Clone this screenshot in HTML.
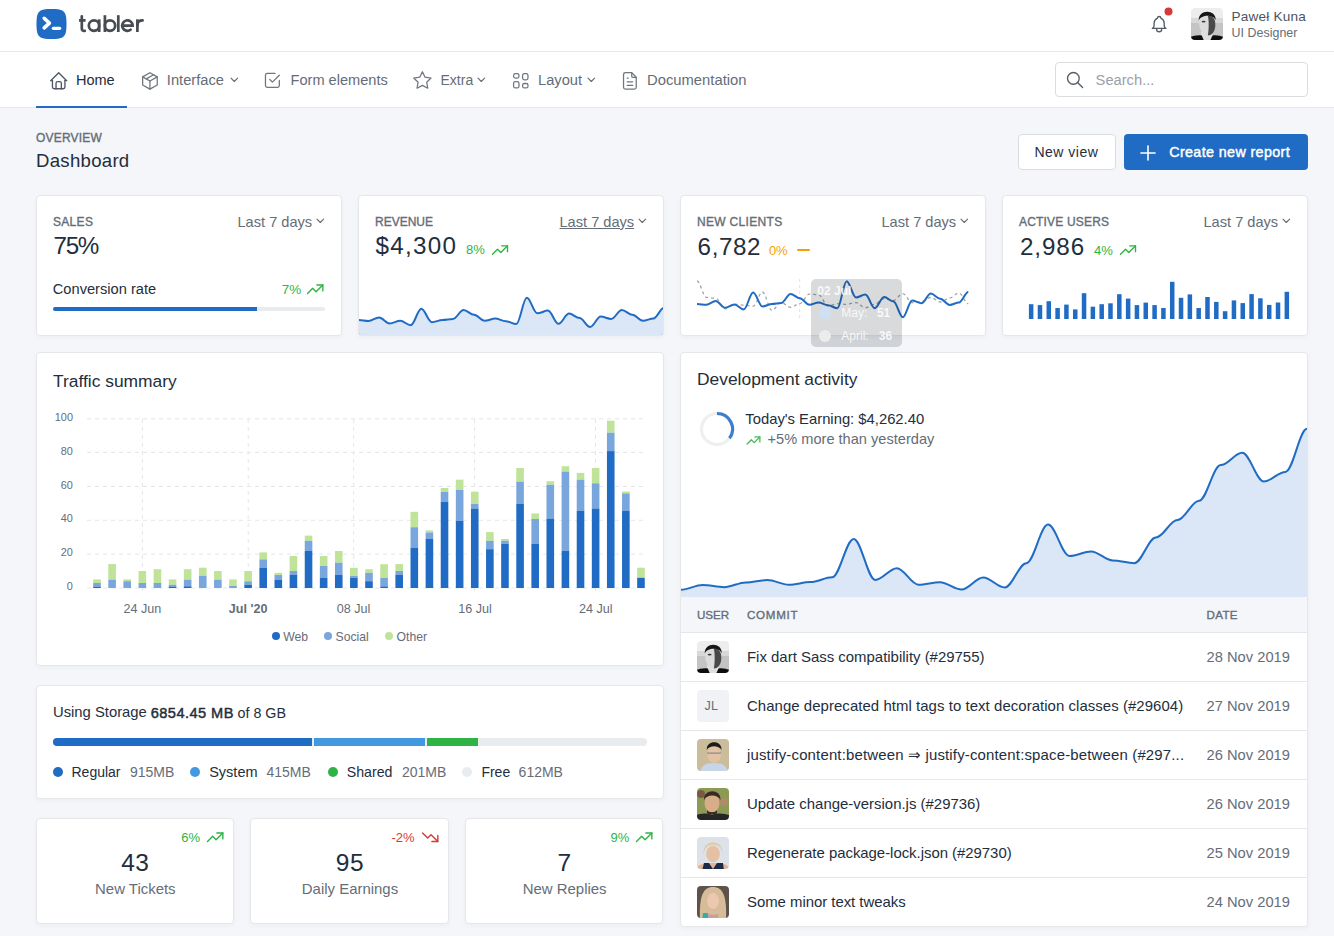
<!DOCTYPE html>
<html><head><meta charset="utf-8"><title>Dashboard - Tabler</title>
<style>
html,body{margin:0;padding:0;}
body{width:1334px;height:936px;overflow:hidden;position:relative;background:#f4f6fa;font-family:"Liberation Sans",sans-serif;}
.t{position:absolute;line-height:1;white-space:nowrap;}
.r{position:absolute;}
svg.r{overflow:visible;}
</style></head><body>
<div class="r" style="left:0px;top:0px;width:1334px;height:51px;background:#fff;"></div>
<div class="r" style="left:0px;top:51px;width:1334px;height:1px;background:#e6e7e9;"></div>
<svg class="r" style="left:36px;top:9px;" width="31" height="30" viewBox="0 0 31 30"><path d="M15.5 0C28.3 0 30.5 2.2 30.5 15S28.3 30 15.5 30S0.5 27.8 0.5 15S2.7 0 15.5 0z" fill="#206bc4"/><path d="M8.2 9.3l5.2 4.8l-5.2 4.8" fill="none" stroke="#fff" stroke-width="3.6" stroke-linecap="round" stroke-linejoin="round"/><line x1="17.3" y1="19.3" x2="23.7" y2="19.3" stroke="#fff" stroke-width="3.2" stroke-linecap="round"/></svg>
<svg class="r" style="left:70px;top:10px;" width="80" height="30" viewBox="0 0 80 30"><g transform="translate(-70,-10)" fill="none" stroke="#474b52" stroke-width="2.7" stroke-linecap="butt"><path d="M81.8 16.3 V28.6 Q81.8 31.2 84.8 30.9" stroke-linecap="round"/><path d="M79 20.4 H85.6"/><circle cx="94" cy="25.6" r="5.2"/><path d="M99.2 19.3 V32"/><path d="M104.9 15.2 V32"/><circle cx="110" cy="25.6" r="5.2"/><path d="M118.3 15.2 V32"/><path d="M122.3 25.6 H132.6 A5.2 5.2 0 1 0 130.6 29.7" stroke-linecap="round"/><path d="M137.4 19.3 V32"/><path d="M137.4 25 Q137.6 20.4 142.6 20.4" stroke-linecap="round"/></g></svg>
<svg class="r" style="left:1148.8px;top:14.0px" width="20.3" height="20.3" viewBox="0 0 24 24" fill="none" stroke="#565d67" stroke-width="1.6" stroke-linecap="round" stroke-linejoin="round"><path d="M10 5a2 2 0 0 1 4 0a7 7 0 0 1 4 6v3a4 4 0 0 0 2 3h-16a4 4 0 0 0 2 -3v-3a7 7 0 0 1 4 -6"/><path d="M9 17v1a3 3 0 0 0 6 0v-1"/></svg>
<svg class="r" style="left:1164px;top:7px;" width="9" height="9" viewBox="0 0 9 9"><circle cx="4.5" cy="4.5" r="4" fill="#d63939"/></svg>
<svg class="r" style="left:1191px;top:8px;" width="32" height="32" viewBox="0 0 32 32"><defs><clipPath id="ch"><rect width="32" height="32" rx="4"/></clipPath><filter id="fh" x="-20%" y="-20%" width="140%" height="140%"><feGaussianBlur stdDeviation="0.7"/></filter></defs><g clip-path="url(#ch)"><g filter="url(#fh)"><rect x="-2" y="-2" width="36" height="36" fill="#ededed"/><rect x="-2" y="13" width="36" height="21" fill="#c4c4c4"/><rect x="-2" y="10" width="36" height="5" fill="#d8d8d8"/><path d="M10 34 L10 24 L22 24 L22 34z" fill="#dedede"/><ellipse cx="16.2" cy="16" rx="8" ry="10.8" fill="#dcdcdc"/><path d="M16.8 7.5 C22.5 7.5 24.8 12 24.3 18 C23.8 24.5 20.5 27.5 16.8 27.5 C18 22 18 12 16.8 7.5z" fill="#4a4a4a"/><ellipse cx="12.6" cy="13.6" rx="2" ry="0.9" fill="#3a3a3a"/><path d="M7.8 12.5 C6.8 1.5 25 0.5 24.8 12.5 C23 6.5 10.5 6 7.8 12.5z" fill="#161616"/><path d="M-2 34 L-2 29.5 C3 27.5 7 27 10.8 27.5 L13.5 34z" fill="#101010"/><path d="M34 34 L34 29.5 C29 27.5 25 27 21.5 27.5 L18.5 34z" fill="#101010"/></g></g></svg>
<div class="t" style="left:1231.50px;top:10.08px;font-size:13.6px;color:#4d5562;letter-spacing:0.2px;">Paweł Kuna</div>
<div class="t" style="left:1231.50px;top:26.70px;font-size:12.4px;color:#656d77;letter-spacing:0.05px;">UI Designer</div>
<div class="r" style="left:0px;top:52px;width:1334px;height:55px;background:#fff;"></div>
<div class="r" style="left:0px;top:107px;width:1334px;height:1px;background:#e6e7e9;"></div>
<div class="r" style="left:36px;top:106px;width:91px;height:2px;background:#206bc4;"></div>
<svg class="r" style="left:48px;top:69.8px" width="21.4" height="21.4" viewBox="0 0 24 24" fill="none" stroke="#4f5763" stroke-width="1.5" stroke-linecap="round" stroke-linejoin="round"><path d="M5 12l-2 0l9 -9l9 9l-2 0"/><path d="M5 12v7a2 2 0 0 0 2 2h10a2 2 0 0 0 2 -2v-7"/><path d="M9 21v-6a2 2 0 0 1 2 -2h2a2 2 0 0 1 2 2v6"/></svg>
<div class="t" style="left:76.00px;top:72.82px;font-size:14.5px;color:#232e3c;">Home</div>
<svg class="r" style="left:138.5px;top:70px" width="21.9" height="21.9" viewBox="0 0 24 24" fill="none" stroke="#6f7681" stroke-width="1.4" stroke-linecap="round" stroke-linejoin="round"><polyline points="12 3 20 7.5 20 16.5 12 21 4 16.5 4 7.5 12 3"/><line x1="12" y1="12" x2="20" y2="7.5"/><line x1="12" y1="12" x2="12" y2="21"/><line x1="12" y1="12" x2="4" y2="7.5"/><line x1="16" y1="5.25" x2="8" y2="9.75"/></svg>
<div class="t" style="left:166.80px;top:72.65px;font-size:14.7px;color:#656d77;">Interface</div>
<svg class="r" style="left:229.6px;top:77.2px;" width="10" height="7" viewBox="0 0 10 7"><polyline points="1,1.2 4.3,4.5 7.6,1.2" fill="none" stroke="#656d77" stroke-width="1.15" stroke-linecap="round" stroke-linejoin="round"/></svg>
<svg class="r" style="left:262.1px;top:70px" width="20.8" height="20.8" viewBox="0 0 24 24" fill="none" stroke="#6f7681" stroke-width="1.45" stroke-linecap="round" stroke-linejoin="round"><polyline points="9 11 12 14 20 6"/><path d="M20 12v6a2 2 0 0 1 -2 2h-12a2 2 0 0 1 -2 -2v-12a2 2 0 0 1 2 -2h9"/></svg>
<div class="t" style="left:290.50px;top:72.74px;font-size:14.6px;color:#656d77;">Form elements</div>
<svg class="r" style="left:412.1px;top:69.5px" width="20.8" height="20.8" viewBox="0 0 24 24" fill="none" stroke="#6f7681" stroke-width="1.45" stroke-linecap="round" stroke-linejoin="round"><path d="M12 17.75l-6.172 3.245l1.179 -6.873l-5 -4.867l6.9 -1l3.086 -6.253l3.086 6.253l6.9 1l-5 4.867l1.179 6.873z"/></svg>
<div class="t" style="left:440.50px;top:73.25px;font-size:14.0px;color:#656d77;">Extra</div>
<svg class="r" style="left:477px;top:77.2px;" width="10" height="7" viewBox="0 0 10 7"><polyline points="1,1.2 4.3,4.5 7.6,1.2" fill="none" stroke="#656d77" stroke-width="1.15" stroke-linecap="round" stroke-linejoin="round"/></svg>
<svg class="r" style="left:509.7px;top:69.7px" width="21.6" height="21.6" viewBox="0 0 24 24" fill="none" stroke="#6f7681" stroke-width="1.4" stroke-linecap="round" stroke-linejoin="round"><rect x="4" y="4" width="6" height="5" rx="2"/><rect x="4" y="13" width="6" height="7" rx="2"/><rect x="14" y="4" width="6" height="7" rx="2"/><rect x="14" y="15" width="6" height="5" rx="2"/></svg>
<div class="t" style="left:538.00px;top:72.65px;font-size:14.7px;color:#656d77;">Layout</div>
<svg class="r" style="left:586.6px;top:77.2px;" width="10" height="7" viewBox="0 0 10 7"><polyline points="1,1.2 4.3,4.5 7.6,1.2" fill="none" stroke="#656d77" stroke-width="1.15" stroke-linecap="round" stroke-linejoin="round"/></svg>
<svg class="r" style="left:618.5px;top:69.8px" width="21.8" height="21.8" viewBox="0 0 24 24" fill="none" stroke="#6f7681" stroke-width="1.4" stroke-linecap="round" stroke-linejoin="round"><path d="M14 3v4a1 1 0 0 0 1 1h4"/><path d="M17 21h-10a2 2 0 0 1 -2 -2v-14a2 2 0 0 1 2 -2h7l5 5v11a2 2 0 0 1 -2 2z"/><line x1="9" y1="9" x2="10" y2="9"/><line x1="9" y1="13" x2="15" y2="13"/><line x1="9" y1="17" x2="15" y2="17"/></svg>
<div class="t" style="left:647.00px;top:72.57px;font-size:14.8px;color:#656d77;">Documentation</div>
<div class="r" style="left:1055px;top:62px;width:253px;height:35px;background:#fff;border:1px solid #dadcde;border-radius:4px;box-sizing:border-box;"></div>
<svg class="r" style="left:1065px;top:69.9px" width="20.1" height="20.1" viewBox="0 0 24 24" fill="none" stroke="#565d67" stroke-width="1.6" stroke-linecap="round" stroke-linejoin="round"><circle cx="10" cy="10" r="7"/><line x1="21" y1="21" x2="15" y2="15"/></svg>
<div class="t" style="left:1095.60px;top:72.55px;font-size:14.7px;color:#9aa0ac;">Search...</div>
<div class="t" style="left:36.00px;top:131.84px;font-size:12px;color:#656d77;letter-spacing:0.2px;-webkit-text-stroke:0.35px #656d77;">OVERVIEW</div>
<div class="t" style="left:36.00px;top:152.25px;font-size:18.6px;color:#232e3c;letter-spacing:0.28px;">Dashboard</div>
<div class="r" style="left:1018px;top:134px;width:98px;height:36px;background:#fff;border:1px solid #dadcde;border-radius:4px;box-sizing:border-box;"></div>
<div class="t" style="left:1034.40px;top:145.15px;font-size:14px;color:#232e3c;letter-spacing:0.5px;">New view</div>
<div class="r" style="left:1124px;top:134px;width:184px;height:36px;background:#206bc4;border-radius:4px;"></div>
<svg class="r" style="left:1135.75px;top:141.25px" width="24" height="24" viewBox="0 0 24 24" fill="none" stroke="#fff" stroke-width="1.6" stroke-linecap="round" stroke-linejoin="round"><line x1="12" y1="5" x2="12" y2="19"/><line x1="5" y1="12" x2="19" y2="12"/></svg>
<div class="t" style="left:1169.20px;top:144.69px;font-size:14.3px;color:#fff;letter-spacing:0.38px;-webkit-text-stroke:0.45px #fff;">Create new report</div>
<div class="r" style="left:36px;top:195px;width:306px;height:141px;background:#fff;border:1px solid #e6e7e9;border-radius:4px;box-sizing:border-box;box-shadow:0 2px 4px rgba(35,46,60,.04);"></div>
<div class="r" style="left:358px;top:195px;width:306px;height:141px;background:#fff;border:1px solid #e6e7e9;border-radius:4px;box-sizing:border-box;box-shadow:0 2px 4px rgba(35,46,60,.04);"></div>
<div class="r" style="left:680px;top:195px;width:306px;height:141px;background:#fff;border:1px solid #e6e7e9;border-radius:4px;box-sizing:border-box;box-shadow:0 2px 4px rgba(35,46,60,.04);"></div>
<div class="r" style="left:1002px;top:195px;width:306px;height:141px;background:#fff;border:1px solid #e6e7e9;border-radius:4px;box-sizing:border-box;box-shadow:0 2px 4px rgba(35,46,60,.04);"></div>
<div class="t" style="left:53.00px;top:215.84px;font-size:12px;color:#656d77;letter-spacing:0.3px;-webkit-text-stroke:0.35px #656d77;">SALES</div>
<div class="t" style="left:375.00px;top:215.84px;font-size:12px;color:#656d77;-webkit-text-stroke:0.35px #656d77;">REVENUE</div>
<div class="t" style="left:697.00px;top:215.84px;font-size:12px;color:#656d77;letter-spacing:0.32px;-webkit-text-stroke:0.35px #656d77;">NEW CLIENTS</div>
<div class="t" style="left:1019.00px;top:215.84px;font-size:12px;color:#656d77;letter-spacing:0.18px;-webkit-text-stroke:0.35px #656d77;">ACTIVE USERS</div>
<div class="t" style="left:237.50px;top:214.64px;font-size:14.6px;color:#656d77;">Last 7 days</div>
<svg class="r" style="left:316px;top:217.6px;" width="10" height="7" viewBox="0 0 10 7"><polyline points="1,1.2 4.3,4.5 7.6,1.2" fill="none" stroke="#656d77" stroke-width="1.15" stroke-linecap="round" stroke-linejoin="round"/></svg>
<div class="t" style="left:559.50px;top:214.64px;font-size:14.6px;color:#656d77;text-decoration:underline;text-underline-offset:1px;">Last 7 days</div>
<svg class="r" style="left:638px;top:217.6px;" width="10" height="7" viewBox="0 0 10 7"><polyline points="1,1.2 4.3,4.5 7.6,1.2" fill="none" stroke="#656d77" stroke-width="1.15" stroke-linecap="round" stroke-linejoin="round"/></svg>
<div class="t" style="left:881.50px;top:214.64px;font-size:14.6px;color:#656d77;">Last 7 days</div>
<svg class="r" style="left:960px;top:217.6px;" width="10" height="7" viewBox="0 0 10 7"><polyline points="1,1.2 4.3,4.5 7.6,1.2" fill="none" stroke="#656d77" stroke-width="1.15" stroke-linecap="round" stroke-linejoin="round"/></svg>
<div class="t" style="left:1203.50px;top:214.64px;font-size:14.6px;color:#656d77;">Last 7 days</div>
<svg class="r" style="left:1282px;top:217.6px;" width="10" height="7" viewBox="0 0 10 7"><polyline points="1,1.2 4.3,4.5 7.6,1.2" fill="none" stroke="#656d77" stroke-width="1.15" stroke-linecap="round" stroke-linejoin="round"/></svg>
<div class="t" style="left:53.50px;top:234.21px;font-size:24.2px;color:#232e3c;letter-spacing:-1.3px;">75%</div>
<div class="t" style="left:52.80px;top:281.60px;font-size:14.65px;color:#232e3c;">Conversion rate</div>
<div class="t" style="left:281.70px;top:282.57px;font-size:13.5px;color:#2fb344;">7%</div>
<svg class="r" style="left:304.95px;top:279.15px" width="20.4" height="20.4" viewBox="0 0 24 24" fill="none" stroke="#2fb344" stroke-width="1.65" stroke-linecap="round" stroke-linejoin="round"><polyline points="3 17 9 11 13 15 21 7"/><polyline points="14 7 21 7 21 14"/></svg>
<div class="r" style="left:53px;top:307px;width:272px;height:4px;background:#e9ecef;border-radius:2px;"></div>
<div class="r" style="left:53px;top:307px;width:204px;height:4px;background:#206bc4;border-radius:2px 0 0 2px;"></div>
<div class="t" style="left:375.60px;top:233.91px;font-size:24.2px;color:#232e3c;letter-spacing:1.3px;">$4,300</div>
<div class="t" style="left:466.00px;top:243.39px;font-size:13px;color:#2fb344;">8%</div>
<svg class="r" style="left:490.1px;top:239.87px" width="20" height="20" viewBox="0 0 24 24" fill="none" stroke="#2fb344" stroke-width="1.65" stroke-linecap="round" stroke-linejoin="round"><polyline points="3 17 9 11 13 15 21 7"/><polyline points="14 7 21 7 21 14"/></svg>
<div class="t" style="left:697.60px;top:234.51px;font-size:24.2px;color:#232e3c;letter-spacing:0.6px;">6,782</div>
<div class="t" style="left:768.90px;top:243.59px;font-size:13px;color:#f59f00;">0%</div>
<div class="r" style="left:796.5px;top:249.2px;width:13px;height:1.6px;background:#f59f00;border-radius:1px;"></div>
<div class="t" style="left:1020.00px;top:234.51px;font-size:24.2px;color:#232e3c;letter-spacing:0.9px;">2,986</div>
<div class="t" style="left:1094.00px;top:243.59px;font-size:13px;color:#2fb344;">4%</div>
<svg class="r" style="left:1118.2px;top:239.77px" width="20" height="20" viewBox="0 0 24 24" fill="none" stroke="#2fb344" stroke-width="1.65" stroke-linecap="round" stroke-linejoin="round"><polyline points="3 17 9 11 13 15 21 7"/><polyline points="14 7 21 7 21 14"/></svg>
<svg class="r" style="left:358px;top:196px;" width="306" height="140" viewBox="0 0 306 140"><defs><clipPath id="cr"><rect x="1" y="0" width="304" height="139"/></clipPath></defs><g clip-path="url(#cr)"><g transform="translate(-358,-196)"><path d="M358.00,320.00 C361.69,320.00 364.86,321.00 368.55,321.00 C372.24,321.00 375.41,317.40 379.10,317.40 C382.80,317.40 385.96,323.40 389.66,323.40 C393.35,323.40 396.51,320.80 400.21,320.80 C403.90,320.80 407.07,325.20 410.76,325.20 C414.45,325.20 417.62,308.80 421.31,308.80 C425.00,308.80 428.17,322.20 431.86,322.20 C435.56,322.20 438.72,320.00 442.41,320.00 C446.11,320.00 449.27,319.00 452.97,319.00 C456.66,319.00 459.82,310.00 463.52,310.00 C467.21,310.00 470.38,314.80 474.07,314.80 C477.76,314.80 480.93,320.80 484.62,320.80 C488.31,320.80 491.48,318.60 495.17,318.60 C498.87,318.60 502.03,321.20 505.72,321.20 C509.42,321.20 512.58,324.10 516.28,324.10 C519.97,324.10 523.13,297.80 526.83,297.80 C530.52,297.80 533.69,313.30 537.38,313.30 C541.07,313.30 544.24,310.60 547.93,310.60 C551.62,310.60 554.79,323.80 558.48,323.80 C562.18,323.80 565.34,313.60 569.03,313.60 C572.73,313.60 575.89,318.10 579.59,318.10 C583.28,318.10 586.44,327.00 590.14,327.00 C593.83,327.00 597.00,316.60 600.69,316.60 C604.38,316.60 607.55,319.00 611.24,319.00 C614.93,319.00 618.10,310.00 621.79,310.00 C625.49,310.00 628.65,314.80 632.34,314.80 C636.04,314.80 639.20,320.80 642.90,320.80 C646.59,320.80 649.76,318.40 653.45,318.40 C657.14,318.40 660.31,307.80 664.00,307.80 L664,336 L358,336 Z" fill="#206bc4" fill-opacity=".16"/><path d="M358.00,320.00 C361.69,320.00 364.86,321.00 368.55,321.00 C372.24,321.00 375.41,317.40 379.10,317.40 C382.80,317.40 385.96,323.40 389.66,323.40 C393.35,323.40 396.51,320.80 400.21,320.80 C403.90,320.80 407.07,325.20 410.76,325.20 C414.45,325.20 417.62,308.80 421.31,308.80 C425.00,308.80 428.17,322.20 431.86,322.20 C435.56,322.20 438.72,320.00 442.41,320.00 C446.11,320.00 449.27,319.00 452.97,319.00 C456.66,319.00 459.82,310.00 463.52,310.00 C467.21,310.00 470.38,314.80 474.07,314.80 C477.76,314.80 480.93,320.80 484.62,320.80 C488.31,320.80 491.48,318.60 495.17,318.60 C498.87,318.60 502.03,321.20 505.72,321.20 C509.42,321.20 512.58,324.10 516.28,324.10 C519.97,324.10 523.13,297.80 526.83,297.80 C530.52,297.80 533.69,313.30 537.38,313.30 C541.07,313.30 544.24,310.60 547.93,310.60 C551.62,310.60 554.79,323.80 558.48,323.80 C562.18,323.80 565.34,313.60 569.03,313.60 C572.73,313.60 575.89,318.10 579.59,318.10 C583.28,318.10 586.44,327.00 590.14,327.00 C593.83,327.00 597.00,316.60 600.69,316.60 C604.38,316.60 607.55,319.00 611.24,319.00 C614.93,319.00 618.10,310.00 621.79,310.00 C625.49,310.00 628.65,314.80 632.34,314.80 C636.04,314.80 639.20,320.80 642.90,320.80 C646.59,320.80 649.76,318.40 653.45,318.40 C657.14,318.40 660.31,307.80 664.00,307.80" fill="none" stroke="#206bc4" stroke-width="2"/></g></g></svg>
<svg class="r" style="left:680px;top:196px;overflow:visible;" width="306" height="160" viewBox="0 0 306 160"><g transform="translate(-680,-196)"><line x1="799.7" y1="279" x2="799.7" y2="318" stroke="#dfe2e6" stroke-width="1" stroke-dasharray="3,3"/><path d="M697.00,281.00 C700.27,281.00 703.08,297.30 706.36,297.30 C709.63,297.30 712.44,298.30 715.71,298.30 C718.98,298.30 721.79,308.80 725.07,308.80 C728.34,308.80 731.15,304.10 734.42,304.10 C737.69,304.10 740.50,305.20 743.77,305.20 C747.05,305.20 749.86,306.20 753.13,306.20 C756.40,306.20 759.21,292.00 762.49,292.00 C765.76,292.00 768.57,310.40 771.84,310.40 C775.11,310.40 777.92,302.50 781.20,302.50 C784.47,302.50 787.28,307.30 790.55,307.30 C793.82,307.30 796.63,303.60 799.90,303.60 C803.18,303.60 805.99,294.10 809.26,294.10 C812.53,294.10 815.34,294.70 818.62,294.70 C821.89,294.70 824.70,306.00 827.97,306.00 C831.24,306.00 834.05,303.70 837.33,303.70 C840.60,303.70 843.41,304.30 846.68,304.30 C849.95,304.30 852.76,302.60 856.03,302.60 C859.31,302.60 862.12,307.70 865.39,307.70 C868.66,307.70 871.47,304.30 874.75,304.30 C878.02,304.30 880.83,298.70 884.10,298.70 C887.37,298.70 890.18,300.40 893.46,300.40 C896.73,300.40 899.54,293.60 902.81,293.60 C906.08,293.60 908.89,302.60 912.16,302.60 C915.44,302.60 918.25,301.50 921.52,301.50 C924.79,301.50 927.60,297.50 930.88,297.50 C934.15,297.50 936.96,302.00 940.23,302.00 C943.50,302.00 946.31,298.00 949.59,298.00 C952.86,298.00 955.67,293.00 958.94,293.00 C962.21,293.00 965.02,303.70 968.30,303.70" fill="none" stroke="#a0a5ab" stroke-width="1.3" stroke-dasharray="3,3"/><path d="M697.00,304.10 C700.27,304.10 703.08,304.80 706.36,304.80 C709.63,304.80 712.44,301.00 715.71,301.00 C718.98,301.00 721.79,307.80 725.07,307.80 C728.34,307.80 731.15,304.40 734.42,304.40 C737.69,304.40 740.50,309.40 743.77,309.40 C747.05,309.40 749.86,292.60 753.13,292.60 C756.40,292.60 759.21,306.50 762.49,306.50 C765.76,306.50 768.57,304.10 771.84,304.10 C775.11,304.10 777.92,303.10 781.20,303.10 C784.47,303.10 787.28,294.00 790.55,294.00 C793.82,294.00 796.63,298.30 799.90,298.30 C803.18,298.30 805.99,304.80 809.26,304.80 C812.53,304.80 815.34,302.50 818.62,302.50 C821.89,302.50 824.70,305.30 827.97,305.30 C831.24,305.30 834.05,308.20 837.33,308.20 C840.60,308.20 843.41,281.20 846.68,281.20 C849.95,281.20 852.76,297.50 856.03,297.50 C859.31,297.50 862.12,294.50 865.39,294.50 C868.66,294.50 871.47,308.20 874.75,308.20 C878.02,308.20 880.83,297.00 884.10,297.00 C887.37,297.00 890.18,301.50 893.46,301.50 C896.73,301.50 899.54,317.20 902.81,317.20 C906.08,317.20 908.89,300.40 912.16,300.40 C915.44,300.40 918.25,303.20 921.52,303.20 C924.79,303.20 927.60,293.60 930.88,293.60 C934.15,293.60 936.96,298.70 940.23,298.70 C943.50,298.70 946.31,304.90 949.59,304.90 C952.86,304.90 955.67,302.60 958.94,302.60 C962.21,302.60 965.02,292.00 968.30,292.00" fill="none" stroke="#206bc4" stroke-width="2"/></g></svg>
<div class="r" style="left:811px;top:279px;width:91px;height:68px;background:rgba(20,24,30,.16);border-radius:5px;"></div>
<div class="t" style="left:817.30px;top:285.04px;font-size:12px;color:rgba(255,255,255,.85);font-weight:700;">02 Jul</div>
<svg class="r" style="left:818px;top:306px;" width="14" height="14" viewBox="0 0 14 14"><circle cx="7" cy="7" r="6" fill="#cfe0f5"/></svg>
<svg class="r" style="left:818px;top:329px;" width="14" height="14" viewBox="0 0 14 14"><circle cx="7" cy="7" r="6" fill="#ececec"/></svg>
<div class="t" style="left:841.30px;top:306.74px;font-size:12px;color:rgba(255,255,255,.85);">May:</div>
<div class="t" style="left:876.90px;top:306.74px;font-size:12px;color:rgba(255,255,255,.85);font-weight:700;">51</div>
<div class="t" style="left:841.30px;top:329.54px;font-size:12px;color:rgba(255,255,255,.85);">April:</div>
<div class="t" style="left:878.80px;top:329.54px;font-size:12px;color:rgba(255,255,255,.85);font-weight:700;">36</div>
<svg class="r" style="left:1002px;top:196px;" width="306" height="140" viewBox="0 0 306 140"><rect x="26.90" y="108.20" width="4.5" height="14.80" fill="#206bc4"/><rect x="35.72" y="109.10" width="4.5" height="13.90" fill="#206bc4"/><rect x="44.53" y="105.20" width="4.5" height="17.80" fill="#206bc4"/><rect x="53.35" y="112.00" width="4.5" height="11.00" fill="#206bc4"/><rect x="62.17" y="108.60" width="4.5" height="14.40" fill="#206bc4"/><rect x="70.99" y="113.40" width="4.5" height="9.60" fill="#206bc4"/><rect x="79.80" y="97.20" width="4.5" height="25.80" fill="#206bc4"/><rect x="88.62" y="110.70" width="4.5" height="12.30" fill="#206bc4"/><rect x="97.44" y="108.20" width="4.5" height="14.80" fill="#206bc4"/><rect x="106.25" y="107.30" width="4.5" height="15.70" fill="#206bc4"/><rect x="115.07" y="98.20" width="4.5" height="24.80" fill="#206bc4"/><rect x="123.89" y="102.60" width="4.5" height="20.40" fill="#206bc4"/><rect x="132.70" y="109.10" width="4.5" height="13.90" fill="#206bc4"/><rect x="141.52" y="106.60" width="4.5" height="16.40" fill="#206bc4"/><rect x="150.34" y="109.10" width="4.5" height="13.90" fill="#206bc4"/><rect x="159.16" y="112.00" width="4.5" height="11.00" fill="#206bc4"/><rect x="167.97" y="85.80" width="4.5" height="37.20" fill="#206bc4"/><rect x="176.79" y="101.80" width="4.5" height="21.20" fill="#206bc4"/><rect x="185.61" y="98.40" width="4.5" height="24.60" fill="#206bc4"/><rect x="194.42" y="112.00" width="4.5" height="11.00" fill="#206bc4"/><rect x="203.24" y="101.00" width="4.5" height="22.00" fill="#206bc4"/><rect x="212.06" y="105.90" width="4.5" height="17.10" fill="#206bc4"/><rect x="220.87" y="115.20" width="4.5" height="7.80" fill="#206bc4"/><rect x="229.69" y="104.40" width="4.5" height="18.60" fill="#206bc4"/><rect x="238.51" y="107.10" width="4.5" height="15.90" fill="#206bc4"/><rect x="247.33" y="98.10" width="4.5" height="24.90" fill="#206bc4"/><rect x="256.14" y="102.30" width="4.5" height="20.70" fill="#206bc4"/><rect x="264.96" y="108.90" width="4.5" height="14.10" fill="#206bc4"/><rect x="273.78" y="106.50" width="4.5" height="16.50" fill="#206bc4"/><rect x="282.59" y="95.80" width="4.5" height="27.20" fill="#206bc4"/></svg>
<div class="r" style="left:36px;top:352px;width:628px;height:314px;background:#fff;border:1px solid #e6e7e9;border-radius:4px;box-sizing:border-box;box-shadow:0 2px 4px rgba(35,46,60,.04);"></div>
<div class="t" style="left:53.00px;top:372.87px;font-size:17.4px;color:#232e3c;">Traffic summary</div>
<svg class="r" style="left:36px;top:352px;" width="628" height="313" viewBox="0 0 628 313"><g transform="translate(-36,-352)"><line x1="87" y1="588" x2="647" y2="588" stroke="#e4e6e9" stroke-width="1" stroke-dasharray="4,4"/><line x1="87" y1="554.1" x2="647" y2="554.1" stroke="#e4e6e9" stroke-width="1" stroke-dasharray="4,4"/><line x1="87" y1="520.3" x2="647" y2="520.3" stroke="#e4e6e9" stroke-width="1" stroke-dasharray="4,4"/><line x1="87" y1="486.5" x2="647" y2="486.5" stroke="#e4e6e9" stroke-width="1" stroke-dasharray="4,4"/><line x1="87" y1="452.4" x2="647" y2="452.4" stroke="#e4e6e9" stroke-width="1" stroke-dasharray="4,4"/><line x1="87" y1="418.8" x2="647" y2="418.8" stroke="#e4e6e9" stroke-width="1" stroke-dasharray="4,4"/><line x1="142.4" y1="419" x2="142.4" y2="595" stroke="#e4e6e9" stroke-width="1" stroke-dasharray="4,4"/><line x1="248.2" y1="419" x2="248.2" y2="595" stroke="#e4e6e9" stroke-width="1" stroke-dasharray="4,4"/><line x1="353.7" y1="419" x2="353.7" y2="595" stroke="#e4e6e9" stroke-width="1" stroke-dasharray="4,4"/><line x1="474.6" y1="419" x2="474.6" y2="595" stroke="#e4e6e9" stroke-width="1" stroke-dasharray="4,4"/><line x1="595.5" y1="419" x2="595.5" y2="595" stroke="#e4e6e9" stroke-width="1" stroke-dasharray="4,4"/><rect x="93.20" y="579.4" width="7.6" height="3.60" fill="#bfe399"/><rect x="93.20" y="583" width="7.6" height="3.60" fill="#79a6dc"/><rect x="93.20" y="586.6" width="7.6" height="1.40" fill="#206bc4"/><rect x="108.31" y="564.1" width="7.6" height="15.60" fill="#bfe399"/><rect x="108.31" y="579.7" width="7.6" height="8.30" fill="#79a6dc"/><rect x="123.42" y="579.4" width="7.6" height="1.80" fill="#bfe399"/><rect x="123.42" y="581.2" width="7.6" height="6.80" fill="#79a6dc"/><rect x="138.53" y="571" width="7.6" height="12.00" fill="#bfe399"/><rect x="138.53" y="583" width="7.6" height="5.00" fill="#79a6dc"/><rect x="153.64" y="569.2" width="7.6" height="13.80" fill="#bfe399"/><rect x="153.64" y="583" width="7.6" height="5.00" fill="#79a6dc"/><rect x="168.75" y="579.4" width="7.6" height="5.40" fill="#bfe399"/><rect x="168.75" y="584.8" width="7.6" height="1.80" fill="#79a6dc"/><rect x="168.75" y="586.6" width="7.6" height="1.40" fill="#206bc4"/><rect x="183.86" y="569.2" width="7.6" height="10.50" fill="#bfe399"/><rect x="183.86" y="579.7" width="7.6" height="6.60" fill="#79a6dc"/><rect x="183.86" y="586.3" width="7.6" height="1.70" fill="#206bc4"/><rect x="198.97" y="567.7" width="7.6" height="8.10" fill="#bfe399"/><rect x="198.97" y="575.8" width="7.6" height="12.20" fill="#79a6dc"/><rect x="214.08" y="571" width="7.6" height="8.70" fill="#bfe399"/><rect x="214.08" y="579.7" width="7.6" height="8.30" fill="#79a6dc"/><rect x="229.19" y="579.4" width="7.6" height="6.60" fill="#bfe399"/><rect x="229.19" y="586" width="7.6" height="2.00" fill="#79a6dc"/><rect x="244.30" y="571" width="7.6" height="10.30" fill="#bfe399"/><rect x="244.30" y="581.3" width="7.6" height="3.50" fill="#79a6dc"/><rect x="244.30" y="584.8" width="7.6" height="3.20" fill="#206bc4"/><rect x="259.41" y="552.4" width="7.6" height="7.00" fill="#bfe399"/><rect x="259.41" y="559.4" width="7.6" height="8.40" fill="#79a6dc"/><rect x="259.41" y="567.8" width="7.6" height="20.20" fill="#206bc4"/><rect x="274.52" y="572.8" width="7.6" height="2.20" fill="#bfe399"/><rect x="274.52" y="575" width="7.6" height="4.80" fill="#79a6dc"/><rect x="274.52" y="579.8" width="7.6" height="8.20" fill="#206bc4"/><rect x="289.63" y="556" width="7.6" height="15.00" fill="#bfe399"/><rect x="289.63" y="571" width="7.6" height="4.00" fill="#79a6dc"/><rect x="289.63" y="575" width="7.6" height="13.00" fill="#206bc4"/><rect x="304.74" y="535.6" width="7.6" height="5.20" fill="#bfe399"/><rect x="304.74" y="540.8" width="7.6" height="10.20" fill="#79a6dc"/><rect x="304.74" y="551" width="7.6" height="37.00" fill="#206bc4"/><rect x="319.85" y="556" width="7.6" height="10.00" fill="#bfe399"/><rect x="319.85" y="566" width="7.6" height="12.00" fill="#79a6dc"/><rect x="319.85" y="578" width="7.6" height="10.00" fill="#206bc4"/><rect x="334.96" y="551" width="7.6" height="11.70" fill="#bfe399"/><rect x="334.96" y="562.7" width="7.6" height="12.30" fill="#79a6dc"/><rect x="334.96" y="575" width="7.6" height="13.00" fill="#206bc4"/><rect x="350.07" y="567.8" width="7.6" height="8.10" fill="#bfe399"/><rect x="350.07" y="575.9" width="7.6" height="2.10" fill="#79a6dc"/><rect x="350.07" y="578" width="7.6" height="10.00" fill="#206bc4"/><rect x="365.18" y="569.2" width="7.6" height="3.60" fill="#bfe399"/><rect x="365.18" y="572.8" width="7.6" height="8.40" fill="#79a6dc"/><rect x="365.18" y="581.2" width="7.6" height="6.80" fill="#206bc4"/><rect x="380.29" y="564.2" width="7.6" height="13.80" fill="#bfe399"/><rect x="380.29" y="578" width="7.6" height="8.40" fill="#79a6dc"/><rect x="380.29" y="586.4" width="7.6" height="1.60" fill="#206bc4"/><rect x="395.40" y="564.1" width="7.6" height="6.90" fill="#bfe399"/><rect x="395.40" y="571" width="7.6" height="3.80" fill="#79a6dc"/><rect x="395.40" y="574.8" width="7.6" height="13.20" fill="#206bc4"/><rect x="410.51" y="511.8" width="7.6" height="15.40" fill="#bfe399"/><rect x="410.51" y="527.2" width="7.6" height="20.70" fill="#79a6dc"/><rect x="410.51" y="547.9" width="7.6" height="40.10" fill="#206bc4"/><rect x="425.62" y="530.4" width="7.6" height="2.10" fill="#bfe399"/><rect x="425.62" y="532.5" width="7.6" height="6.40" fill="#79a6dc"/><rect x="425.62" y="538.9" width="7.6" height="49.10" fill="#206bc4"/><rect x="440.73" y="488" width="7.6" height="3.90" fill="#bfe399"/><rect x="440.73" y="491.9" width="7.6" height="9.80" fill="#79a6dc"/><rect x="440.73" y="501.7" width="7.6" height="86.30" fill="#206bc4"/><rect x="455.84" y="479.7" width="7.6" height="10.30" fill="#bfe399"/><rect x="455.84" y="490" width="7.6" height="30.80" fill="#79a6dc"/><rect x="455.84" y="520.8" width="7.6" height="67.20" fill="#206bc4"/><rect x="470.95" y="491.7" width="7.6" height="12.20" fill="#bfe399"/><rect x="470.95" y="503.9" width="7.6" height="4.70" fill="#79a6dc"/><rect x="470.95" y="508.6" width="7.6" height="79.40" fill="#206bc4"/><rect x="486.06" y="532.1" width="7.6" height="8.70" fill="#bfe399"/><rect x="486.06" y="540.8" width="7.6" height="8.40" fill="#79a6dc"/><rect x="486.06" y="549.2" width="7.6" height="38.80" fill="#206bc4"/><rect x="501.17" y="538.9" width="7.6" height="1.90" fill="#bfe399"/><rect x="501.17" y="540.8" width="7.6" height="3.00" fill="#79a6dc"/><rect x="501.17" y="543.8" width="7.6" height="44.20" fill="#206bc4"/><rect x="516.28" y="468" width="7.6" height="13.70" fill="#bfe399"/><rect x="516.28" y="481.7" width="7.6" height="22.20" fill="#79a6dc"/><rect x="516.28" y="503.9" width="7.6" height="84.10" fill="#206bc4"/><rect x="531.39" y="513.5" width="7.6" height="5.50" fill="#bfe399"/><rect x="531.39" y="519" width="7.6" height="24.80" fill="#79a6dc"/><rect x="531.39" y="543.8" width="7.6" height="44.20" fill="#206bc4"/><rect x="546.50" y="481.2" width="7.6" height="3.60" fill="#bfe399"/><rect x="546.50" y="484.8" width="7.6" height="33.80" fill="#79a6dc"/><rect x="546.50" y="518.6" width="7.6" height="69.40" fill="#206bc4"/><rect x="561.61" y="466.2" width="7.6" height="5.40" fill="#bfe399"/><rect x="561.61" y="471.6" width="7.6" height="79.30" fill="#79a6dc"/><rect x="561.61" y="550.9" width="7.6" height="37.10" fill="#206bc4"/><rect x="576.72" y="472.9" width="7.6" height="6.80" fill="#bfe399"/><rect x="576.72" y="479.7" width="7.6" height="31.00" fill="#79a6dc"/><rect x="576.72" y="510.7" width="7.6" height="77.30" fill="#206bc4"/><rect x="591.83" y="468" width="7.6" height="15.30" fill="#bfe399"/><rect x="591.83" y="483.3" width="7.6" height="25.20" fill="#79a6dc"/><rect x="591.83" y="508.5" width="7.6" height="79.50" fill="#206bc4"/><rect x="606.94" y="420.7" width="7.6" height="12.00" fill="#bfe399"/><rect x="606.94" y="432.7" width="7.6" height="18.40" fill="#79a6dc"/><rect x="606.94" y="451.1" width="7.6" height="136.90" fill="#206bc4"/><rect x="622.05" y="491.5" width="7.6" height="1.90" fill="#bfe399"/><rect x="622.05" y="493.4" width="7.6" height="17.30" fill="#79a6dc"/><rect x="622.05" y="510.7" width="7.6" height="77.30" fill="#206bc4"/><rect x="637.16" y="567.7" width="7.6" height="10.10" fill="#bfe399"/><rect x="637.16" y="577.8" width="7.6" height="10.20" fill="#206bc4"/></g></svg>
<div class="t" style="left:54.80px;top:411.97px;font-size:10.9px;color:#656d77;">100</div>
<div class="t" style="left:60.70px;top:445.57px;font-size:10.9px;color:#656d77;">80</div>
<div class="t" style="left:60.70px;top:479.67px;font-size:10.9px;color:#656d77;">60</div>
<div class="t" style="left:60.70px;top:513.47px;font-size:10.9px;color:#656d77;">40</div>
<div class="t" style="left:60.70px;top:547.27px;font-size:10.9px;color:#656d77;">20</div>
<div class="t" style="left:66.70px;top:581.17px;font-size:10.9px;color:#656d77;">0</div>
<div class="t" style="left:123.50px;top:603.33px;font-size:12.6px;color:#656d77;">24 Jun</div>
<div class="t" style="left:228.70px;top:603.33px;font-size:12.6px;color:#656d77;font-weight:700;">Jul '20</div>
<div class="t" style="left:336.80px;top:603.33px;font-size:12.6px;color:#656d77;">08 Jul</div>
<div class="t" style="left:458.30px;top:603.33px;font-size:12.6px;color:#656d77;">16 Jul</div>
<div class="t" style="left:579.00px;top:603.33px;font-size:12.6px;color:#656d77;">24 Jul</div>
<svg class="r" style="left:271px;top:631px;" width="10" height="10" viewBox="0 0 10 10"><circle cx="5" cy="5" r="4" fill="#206bc4"/></svg>
<div class="t" style="left:283.20px;top:630.57px;font-size:12.2px;color:#656d77;">Web</div>
<svg class="r" style="left:323px;top:631px;" width="10" height="10" viewBox="0 0 10 10"><circle cx="5" cy="5" r="4" fill="#79a6dc"/></svg>
<div class="t" style="left:335.60px;top:630.57px;font-size:12.2px;color:#656d77;">Social</div>
<svg class="r" style="left:384px;top:631px;" width="10" height="10" viewBox="0 0 10 10"><circle cx="5" cy="5" r="4" fill="#bfe399"/></svg>
<div class="t" style="left:396.60px;top:630.57px;font-size:12.2px;color:#656d77;">Other</div>
<div class="r" style="left:36px;top:685px;width:628px;height:114px;background:#fff;border:1px solid #e6e7e9;border-radius:4px;box-sizing:border-box;box-shadow:0 2px 4px rgba(35,46,60,.04);"></div>
<div class="t" style="left:53.00px;top:705.47px;font-size:14.8px;color:#232e3c;">Using Storage</div>
<div class="t" style="left:150.70px;top:705.64px;font-size:14.6px;color:#232e3c;letter-spacing:0.45px;-webkit-text-stroke:0.45px #232e3c;">6854.45 MB</div>
<div class="t" style="left:237.50px;top:705.89px;font-size:14.3px;color:#232e3c;">of 8 GB</div>
<div class="r" style="left:53px;top:738px;width:594px;height:8px;background:#e9ecef;border-radius:4px;"></div>
<div class="r" style="left:53px;top:738px;width:259px;height:8px;background:#206bc4;border-radius:4px 0 0 4px;"></div>
<div class="r" style="left:314px;top:738px;width:111px;height:8px;background:#4299e1;"></div>
<div class="r" style="left:427.4px;top:738px;width:50.2px;height:8px;background:#2fb344;"></div>
<svg class="r" style="left:53px;top:767px;" width="10" height="10" viewBox="0 0 10 10"><circle cx="5" cy="5" r="5" fill="#206bc4"/></svg>
<div class="t" style="left:71.50px;top:765.15px;font-size:14.0px;color:#232e3c;">Regular</div>
<div class="t" style="left:130.00px;top:765.15px;font-size:14px;color:#656d77;">915MB</div>
<svg class="r" style="left:190px;top:767px;" width="10" height="10" viewBox="0 0 10 10"><circle cx="5" cy="5" r="5" fill="#4299e1"/></svg>
<div class="t" style="left:209.20px;top:764.72px;font-size:14.5px;color:#232e3c;">System</div>
<div class="t" style="left:266.50px;top:765.15px;font-size:14px;color:#656d77;">415MB</div>
<svg class="r" style="left:327.8px;top:767px;" width="10" height="10" viewBox="0 0 10 10"><circle cx="5" cy="5" r="5" fill="#2fb344"/></svg>
<div class="t" style="left:346.70px;top:764.98px;font-size:14.2px;color:#232e3c;">Shared</div>
<div class="t" style="left:402.00px;top:765.15px;font-size:14px;color:#656d77;">201MB</div>
<svg class="r" style="left:462px;top:767px;" width="10" height="10" viewBox="0 0 10 10"><circle cx="5" cy="5" r="5" fill="#e9ecef"/></svg>
<div class="t" style="left:481.40px;top:765.15px;font-size:14.0px;color:#232e3c;">Free</div>
<div class="t" style="left:518.60px;top:765.15px;font-size:14px;color:#656d77;">612MB</div>
<div class="r" style="left:36px;top:818px;width:198px;height:106px;background:#fff;border:1px solid #e6e7e9;border-radius:4px;box-sizing:border-box;box-shadow:0 2px 4px rgba(35,46,60,.04);"></div>
<div class="t" style="left:36.00px;width:198.67px;text-align:center;top:850.56px;font-size:24.5px;color:#232e3c;letter-spacing:0.5px">43</div>
<div class="t" style="left:36.00px;width:198.67px;text-align:center;top:881.74px;font-size:14.95px;color:#656d77">New Tickets</div>
<div class="t" style="left:138.00px;width:62.00px;text-align:right;top:830.69px;font-size:13px;color:#2fb344">6%</div>
<svg class="r" style="left:204.85px;top:827.05px" width="20.4" height="20.4" viewBox="0 0 24 24" fill="none" stroke="#2fb344" stroke-width="1.65" stroke-linecap="round" stroke-linejoin="round"><polyline points="3 17 9 11 13 15 21 7"/><polyline points="14 7 21 7 21 14"/></svg>
<div class="r" style="left:250px;top:818px;width:199px;height:106px;background:#fff;border:1px solid #e6e7e9;border-radius:4px;box-sizing:border-box;box-shadow:0 2px 4px rgba(35,46,60,.04);"></div>
<div class="t" style="left:250.67px;width:198.67px;text-align:center;top:850.56px;font-size:24.5px;color:#232e3c;letter-spacing:0.5px">95</div>
<div class="t" style="left:250.67px;width:198.67px;text-align:center;top:881.74px;font-size:14.95px;color:#656d77">Daily Earnings</div>
<div class="t" style="left:352.67px;width:62.00px;text-align:right;top:830.69px;font-size:13px;color:#d63939">-2%</div>
<svg class="r" style="left:419.52px;top:827.05px" width="20.4" height="20.4" viewBox="0 0 24 24" fill="none" stroke="#d63939" stroke-width="1.65" stroke-linecap="round" stroke-linejoin="round"><polyline points="3 7 9 13 13 9 21 17"/><polyline points="21 10 21 17 14 17"/></svg>
<div class="r" style="left:465px;top:818px;width:198px;height:106px;background:#fff;border:1px solid #e6e7e9;border-radius:4px;box-sizing:border-box;box-shadow:0 2px 4px rgba(35,46,60,.04);"></div>
<div class="t" style="left:465.34px;width:198.67px;text-align:center;top:850.56px;font-size:24.5px;color:#232e3c;letter-spacing:0.5px">7</div>
<div class="t" style="left:465.34px;width:198.67px;text-align:center;top:881.74px;font-size:14.95px;color:#656d77">New Replies</div>
<div class="t" style="left:567.34px;width:62.00px;text-align:right;top:830.69px;font-size:13px;color:#2fb344">9%</div>
<svg class="r" style="left:634.1899999999999px;top:827.05px" width="20.4" height="20.4" viewBox="0 0 24 24" fill="none" stroke="#2fb344" stroke-width="1.65" stroke-linecap="round" stroke-linejoin="round"><polyline points="3 17 9 11 13 15 21 7"/><polyline points="14 7 21 7 21 14"/></svg>
<div class="r" style="left:680px;top:352px;width:628px;height:575px;background:#fff;border:1px solid #e6e7e9;border-radius:4px;box-sizing:border-box;box-shadow:0 2px 4px rgba(35,46,60,.04);"></div>
<div class="t" style="left:697.00px;top:370.57px;font-size:17.4px;color:#232e3c;">Development activity</div>
<svg class="r" style="left:699px;top:411px;" width="36" height="36" viewBox="0 0 36 36"><circle cx="18" cy="18" r="15.5" fill="none" stroke="#eeeff1" stroke-width="3.2"/><path d="M18 2.5 A15.5 15.5 0 0 1 30.5 27.2" fill="none" stroke="#3b7dd0" stroke-width="3.2"/></svg>
<div class="t" style="left:745.30px;top:412.07px;font-size:14.8px;color:#232e3c;">Today's Earning: $4,262.40</div>
<svg class="r" style="left:744.98px;top:432.04px" width="17" height="17" viewBox="0 0 24 24" fill="none" stroke="#45b854" stroke-width="1.8" stroke-linecap="round" stroke-linejoin="round"><polyline points="3 17 9 11 13 15 21 7"/><polyline points="14 7 21 7 21 14"/></svg>
<div class="t" style="left:767.60px;top:432.14px;font-size:14.6px;color:#656d77;">+5% more than yesterday</div>
<svg class="r" style="left:680px;top:352px;" width="628" height="250" viewBox="0 0 628 250"><g transform="translate(-680,-352)"><path d="M681.00,589.80 C688.56,589.80 695.03,585.00 702.59,585.00 C710.14,585.00 716.62,587.20 724.17,587.20 C731.73,587.20 738.20,582.40 745.76,582.40 C753.31,582.40 759.79,580.00 767.34,580.00 C774.90,580.00 781.38,584.80 788.93,584.80 C796.49,584.80 802.96,582.10 810.52,582.10 C818.07,582.10 824.55,577.30 832.10,577.30 C839.66,577.30 846.13,538.90 853.69,538.90 C861.24,538.90 867.72,580.00 875.28,580.00 C882.83,580.00 889.31,568.20 896.86,568.20 C904.42,568.20 910.89,584.70 918.45,584.70 C926.00,584.70 932.48,582.20 940.03,582.20 C947.59,582.20 954.07,589.60 961.62,589.60 C969.18,589.60 975.65,577.50 983.21,577.50 C990.76,577.50 997.24,587.50 1004.79,587.50 C1012.35,587.50 1018.82,563.20 1026.38,563.20 C1033.93,563.20 1040.41,524.60 1047.97,524.60 C1055.52,524.60 1062.00,556.00 1069.55,556.00 C1077.11,556.00 1083.58,551.40 1091.14,551.40 C1098.69,551.40 1105.17,560.50 1112.72,560.50 C1120.28,560.50 1126.76,563.20 1134.31,563.20 C1141.87,563.20 1148.34,537.50 1155.90,537.50 C1163.45,537.50 1169.93,520.00 1177.48,520.00 C1185.04,520.00 1191.51,500.80 1199.07,500.80 C1206.62,500.80 1213.10,465.10 1220.66,465.10 C1228.21,465.10 1234.69,452.70 1242.24,452.70 C1249.80,452.70 1256.27,481.50 1263.83,481.50 C1271.38,481.50 1277.86,471.90 1285.41,471.90 C1292.97,471.90 1299.44,428.80 1307.00,428.80 L1307,597 L681,597 Z" fill="#206bc4" fill-opacity=".16"/><path d="M681.00,589.80 C688.56,589.80 695.03,585.00 702.59,585.00 C710.14,585.00 716.62,587.20 724.17,587.20 C731.73,587.20 738.20,582.40 745.76,582.40 C753.31,582.40 759.79,580.00 767.34,580.00 C774.90,580.00 781.38,584.80 788.93,584.80 C796.49,584.80 802.96,582.10 810.52,582.10 C818.07,582.10 824.55,577.30 832.10,577.30 C839.66,577.30 846.13,538.90 853.69,538.90 C861.24,538.90 867.72,580.00 875.28,580.00 C882.83,580.00 889.31,568.20 896.86,568.20 C904.42,568.20 910.89,584.70 918.45,584.70 C926.00,584.70 932.48,582.20 940.03,582.20 C947.59,582.20 954.07,589.60 961.62,589.60 C969.18,589.60 975.65,577.50 983.21,577.50 C990.76,577.50 997.24,587.50 1004.79,587.50 C1012.35,587.50 1018.82,563.20 1026.38,563.20 C1033.93,563.20 1040.41,524.60 1047.97,524.60 C1055.52,524.60 1062.00,556.00 1069.55,556.00 C1077.11,556.00 1083.58,551.40 1091.14,551.40 C1098.69,551.40 1105.17,560.50 1112.72,560.50 C1120.28,560.50 1126.76,563.20 1134.31,563.20 C1141.87,563.20 1148.34,537.50 1155.90,537.50 C1163.45,537.50 1169.93,520.00 1177.48,520.00 C1185.04,520.00 1191.51,500.80 1199.07,500.80 C1206.62,500.80 1213.10,465.10 1220.66,465.10 C1228.21,465.10 1234.69,452.70 1242.24,452.70 C1249.80,452.70 1256.27,481.50 1263.83,481.50 C1271.38,481.50 1277.86,471.90 1285.41,471.90 C1292.97,471.90 1299.44,428.80 1307.00,428.80" fill="none" stroke="#206bc4" stroke-width="2"/></g></svg>
<div class="r" style="left:681px;top:597px;width:626px;height:36px;background:#f4f6fa;"></div>
<div class="r" style="left:681px;top:632px;width:626px;height:1px;background:#e6e7e9;"></div>
<div class="t" style="left:697.00px;top:609.38px;font-size:11.6px;color:#656d77;-webkit-text-stroke:0.35px #656d77;">USER</div>
<div class="t" style="left:747.00px;top:609.38px;font-size:11.6px;color:#656d77;letter-spacing:0.7px;-webkit-text-stroke:0.35px #656d77;">COMMIT</div>
<div class="t" style="left:1206.60px;top:609.38px;font-size:11.6px;color:#656d77;letter-spacing:0.3px;-webkit-text-stroke:0.35px #656d77;">DATE</div>
<div class="r" style="left:681px;top:681px;width:626px;height:1px;background:#e6e7e9;"></div>
<svg class="r" style="left:697px;top:641px;" width="32" height="32" viewBox="0 0 32 32"><defs><clipPath id="ca1"><rect width="32" height="32" rx="4"/></clipPath><filter id="fa1" x="-20%" y="-20%" width="140%" height="140%"><feGaussianBlur stdDeviation="0.7"/></filter></defs><g clip-path="url(#ca1)"><g filter="url(#fa1)"><rect x="-2" y="-2" width="36" height="36" fill="#ededed"/><rect x="-2" y="13" width="36" height="21" fill="#c4c4c4"/><rect x="-2" y="10" width="36" height="5" fill="#d8d8d8"/><path d="M10 34 L10 24 L22 24 L22 34z" fill="#dedede"/><ellipse cx="16.2" cy="16" rx="8" ry="10.8" fill="#dcdcdc"/><path d="M16.8 7.5 C22.5 7.5 24.8 12 24.3 18 C23.8 24.5 20.5 27.5 16.8 27.5 C18 22 18 12 16.8 7.5z" fill="#4a4a4a"/><ellipse cx="12.6" cy="13.6" rx="2" ry="0.9" fill="#3a3a3a"/><path d="M7.8 12.5 C6.8 1.5 25 0.5 24.8 12.5 C23 6.5 10.5 6 7.8 12.5z" fill="#161616"/><path d="M-2 34 L-2 29.5 C3 27.5 7 27 10.8 27.5 L13.5 34z" fill="#101010"/><path d="M34 34 L34 29.5 C29 27.5 25 27 21.5 27.5 L18.5 34z" fill="#101010"/></g></g></svg>
<div class="t" style="left:747.00px;top:650.24px;font-size:14.95px;color:#232e3c;white-space:nowrap;">Fix dart Sass compatibility (#29755)</div>
<div class="t" style="left:1206.60px;top:650.45px;font-size:14.7px;color:#656d77;">28 Nov 2019</div>
<div class="r" style="left:681px;top:730px;width:626px;height:1px;background:#e6e7e9;"></div>
<div class="r" style="left:697px;top:690px;width:32px;height:32px;background:#f0f2f6;border-radius:4px;"></div>
<div class="t" style="left:704.50px;top:699.92px;font-size:12.5px;color:#656d77;letter-spacing:0.3px;">JL</div>
<div class="t" style="left:747.00px;top:699.24px;font-size:14.95px;color:#232e3c;letter-spacing:0.057px;white-space:nowrap;">Change deprecated html tags to text decoration classes (#29604)</div>
<div class="t" style="left:1206.60px;top:699.45px;font-size:14.7px;color:#656d77;">27 Nov 2019</div>
<div class="r" style="left:681px;top:779px;width:626px;height:1px;background:#e6e7e9;"></div>
<svg class="r" style="left:697px;top:739px;" width="32" height="32" viewBox="0 0 32 32"><defs><clipPath id="ca3"><rect width="32" height="32" rx="4"/></clipPath><filter id="fa3" x="-20%" y="-20%" width="140%" height="140%"><feGaussianBlur stdDeviation="0.7"/></filter></defs><g clip-path="url(#ca3)"><g filter="url(#fa3)"><rect x="-2" y="-2" width="36" height="36" fill="#cbbd9c"/><ellipse cx="17" cy="15.5" rx="6.8" ry="8.2" fill="#e2c3a6"/><path d="M9.8 11 C9 1 25 0.5 24.5 11 C22 6 12 6 9.8 11z" fill="#1c1c1c"/><rect x="10" y="13.5" width="14" height="1.2" fill="#8a8a8a"/><path d="M3 34 C4 27 8 24 17 24 C26 24 30 27 31 34z" fill="#c6d6e8"/></g></g></svg>
<div class="t" style="left:747.00px;top:748.24px;font-size:14.95px;color:#232e3c;letter-spacing:0.168px;white-space:nowrap;">justify-content:between ⇒ justify-content:space-between (#297...</div>
<div class="t" style="left:1206.60px;top:748.45px;font-size:14.7px;color:#656d77;">26 Nov 2019</div>
<div class="r" style="left:681px;top:828px;width:626px;height:1px;background:#e6e7e9;"></div>
<svg class="r" style="left:697px;top:788px;" width="32" height="32" viewBox="0 0 32 32"><defs><clipPath id="ca4"><rect width="32" height="32" rx="4"/></clipPath><filter id="fa4" x="-20%" y="-20%" width="140%" height="140%"><feGaussianBlur stdDeviation="0.7"/></filter></defs><g clip-path="url(#ca4)"><g filter="url(#fa4)"><rect x="-2" y="-2" width="36" height="36" fill="#8d9a55"/><circle cx="4" cy="6" r="4" fill="#7a5a45"/><circle cx="27" cy="14" r="4" fill="#b08a6a"/><ellipse cx="15" cy="15" rx="7.5" ry="9.8" fill="#d8ad8a"/><path d="M7 12 C6 1 24 0 23.5 12 C21 6 9.5 6 7 12z" fill="#3a2a22"/><path d="M10 22 C12 25 18 25 20 22 L20 25 C18 27 12 27 10 25z" fill="#3a2a22"/><path d="M-2 34 L-2 28 C4 25 9 25 15 27 C21 25 26 25 34 28 L34 34z" fill="#262626"/></g></g></svg>
<div class="t" style="left:747.00px;top:797.24px;font-size:14.95px;color:#232e3c;white-space:nowrap;">Update change-version.js (#29736)</div>
<div class="t" style="left:1206.60px;top:797.45px;font-size:14.7px;color:#656d77;">26 Nov 2019</div>
<div class="r" style="left:681px;top:877px;width:626px;height:1px;background:#e6e7e9;"></div>
<svg class="r" style="left:697px;top:837px;" width="32" height="32" viewBox="0 0 32 32"><defs><clipPath id="ca5"><rect width="32" height="32" rx="4"/></clipPath><filter id="fa5" x="-20%" y="-20%" width="140%" height="140%"><feGaussianBlur stdDeviation="0.7"/></filter></defs><g clip-path="url(#ca5)"><g filter="url(#fa5)"><rect x="-2" y="-2" width="36" height="36" fill="#dde2e8"/><ellipse cx="16" cy="17" rx="6.8" ry="8.2" fill="#e6c0a2"/><path d="M6.5 17 C5 2 26 1 25.5 16 C24 9 20 7.5 16 8 C11 8 8 10 6.5 17z" fill="#dccdae"/><path d="M-2 34 C0 28 4 26 16 26 C28 26 32 28 34 34z" fill="#e0b596"/><path d="M5 34 L7 26 L12 26 L16 32 L20 26 L26 26 L27 34z" fill="#1f2b4a"/></g></g></svg>
<div class="t" style="left:747.00px;top:846.24px;font-size:14.95px;color:#232e3c;letter-spacing:-0.03px;white-space:nowrap;">Regenerate package-lock.json (#29730)</div>
<div class="t" style="left:1206.60px;top:846.45px;font-size:14.7px;color:#656d77;">25 Nov 2019</div>
<svg class="r" style="left:697px;top:886px;" width="32" height="32" viewBox="0 0 32 32"><defs><clipPath id="ca6"><rect width="32" height="32" rx="4"/></clipPath><filter id="fa6" x="-20%" y="-20%" width="140%" height="140%"><feGaussianBlur stdDeviation="0.7"/></filter></defs><g clip-path="url(#ca6)"><g filter="url(#fa6)"><rect x="-2" y="-2" width="36" height="36" fill="#5d524c"/><path d="M3 34 C2 10 6 1 16 1 C26 1 30 10 29 34z" fill="#d6bc98"/><ellipse cx="16" cy="15" rx="5.8" ry="8" fill="#ecc8b0"/><path d="M5 34 L6 27 L11 27 L11 34z" fill="#30b0a8"/><path d="M11 34 L11 28 C14 29 18 29 21 28 L22 34z" fill="#c8a0a0"/></g></g></svg>
<div class="t" style="left:747.00px;top:895.24px;font-size:14.95px;color:#232e3c;letter-spacing:-0.035px;white-space:nowrap;">Some minor text tweaks</div>
<div class="t" style="left:1206.60px;top:895.45px;font-size:14.7px;color:#656d77;">24 Nov 2019</div>
</body></html>
